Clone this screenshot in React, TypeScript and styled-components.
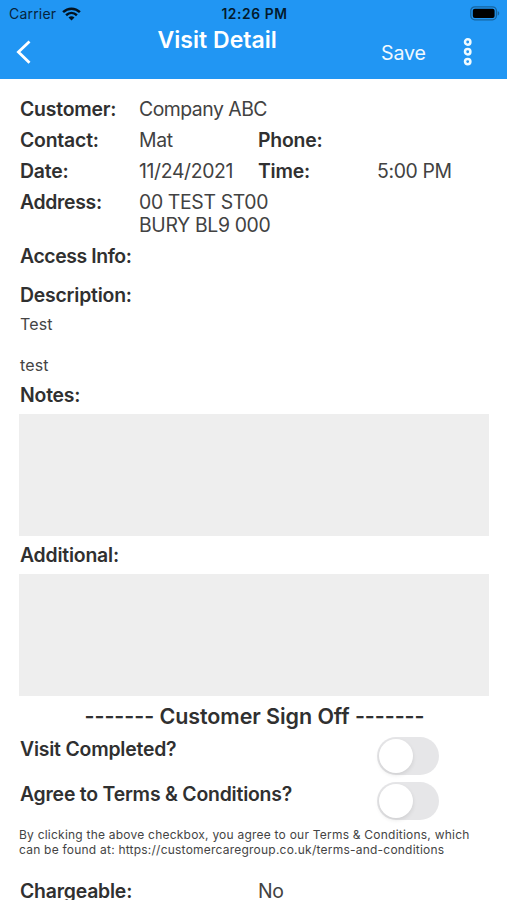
import React from "react";
import styled, { createGlobalStyle } from "styled-components";

const Global = createGlobalStyle`
  * { box-sizing: border-box; }
  html, body { margin: 0; background: #fff; }
  body { height: 900px; overflow: hidden; font-family: Inter, "Liberation Sans", sans-serif; color: #303030; }
`;

const Screen = styled.main`
  width: 507px;
  height: 900px;
  overflow: hidden;
  background: #fff;
`;

const Header = styled.header`
  height: 79px;
  background: #2196f3;
  display: flex;
  flex-direction: column;
`;

const StatusBar = styled.div`
  height: 27px;
  flex: none;
  padding: 0 7px 0 9px;
  display: grid;
  grid-template-columns: 1fr auto 1fr;
  align-items: center;
  line-height: 26px;
  color: #06243d;
`;

const Carrier = styled.div`
  display: flex;
  align-items: center;
  gap: 6px;
  font-size: 14px;
  letter-spacing: 0.2px;
`;

const Clock = styled.div`
  color: #031a2c;
  font-size: 13.8px;
  font-weight: 600;
  letter-spacing: 0.6px;
  white-space: nowrap;
`;

const Battery = styled.svg`
  justify-self: end;
`;

const NavBar = styled.div`
  height: 52px;
  display: grid;
  grid-template-columns: 157.5px 1fr 52px 74px;
  color: #fff;
`;

const BackButton = styled.button`
  border: 0;
  padding: 12px 0 0 15px;
  background: none;
  display: flex;
  align-items: flex-start;
`;

const Title = styled.h1`
  margin: 0;
  font-size: 23px;
  line-height: 27px;
  font-weight: 600;
  letter-spacing: 0.03px;
  white-space: nowrap;
`;

const SaveButton = styled.button`
  border: 0;
  padding: 0;
  background: none;
  color: #f0f9ff;
  font: 400 19.6px/52px Inter, sans-serif;
  letter-spacing: -0.1px;
  text-align: left;
`;

const MenuButton = styled.button`
  border: 0;
  padding: 10px 0 0 29px;
  background: none;
  display: flex;
  align-items: flex-start;
`;

const Content = styled.div`
  padding: 19px 18px 0 20px;
`;

const Details = styled.div`
  display: grid;
  grid-template-columns: 119px 119px 119px 1fr;
  row-gap: 8px;
`;

const Label = styled.div<{ $top?: number; $spacing?: number }>`
  margin-top: ${(p) => p.$top ?? 0}px;
  font-size: 19.4px;
  line-height: 23px;
  font-weight: 600;
  letter-spacing: ${(p) => p.$spacing ?? -0.2}px;
  white-space: nowrap;
`;

const Value = styled.div<{ $span?: number; $spacing?: number }>`
  grid-column: span ${(p) => p.$span ?? 1};
  font-size: 19.4px;
  line-height: 23px;
  letter-spacing: ${(p) => p.$spacing ?? -0.35}px;
  color: #424242;
  white-space: pre;
`;

const Description = styled.p`
  margin: 7px 0 0;
  font-size: 16px;
  line-height: 20.4px;
  letter-spacing: 0.15px;
  white-space: pre-line;
  color: #444;
`;

const NoteArea = styled.div`
  height: 122px;
  margin: 7px 0 0 -1px;
  background: #eee;
`;

const SectionTitle = styled.h2`
  margin: 7px 0 7px;
  text-align: center;
  font-size: 21.5px;
  line-height: 27px;
  font-weight: 600;
  letter-spacing: -0.07px;
  white-space: nowrap;
`;

const ToggleRow = styled.div`
  height: 45px;
  display: grid;
  grid-template-columns: 357px 1fr;
`;

const Switch = styled.button`
  width: 62px;
  height: 38px;
  padding: 2px;
  border: 0;
  border-radius: 19px;
  background: #e6e6e8;
`;

const Knob = styled.span`
  display: block;
  width: 34px;
  height: 34px;
  border-radius: 50%;
  background: #fff;
  box-shadow: 0 2px 4px rgba(0, 0, 0, 0.1);
`;

const Terms = styled.p`
  margin: 1px 0 0 -1px;
  font-size: 12px;
  line-height: 14.3px;
  letter-spacing: 0.225px;
  color: #444;
  white-space: nowrap;
`;

const ChargeRow = styled.div`
  margin-top: 23px;
  display: grid;
  grid-template-columns: 238px 1fr;
`;

function Toggle({ label, top = 0 }: { label: string; top?: number }) {
  return (
    <ToggleRow>
      <Label $top={top}>{label}</Label>
      <Switch role="switch" aria-checked={false} aria-label={label}>
        <Knob />
      </Switch>
    </ToggleRow>
  );
}

export default function App() {
  return (
    <Screen>
      <Global />
      <Header>
        <StatusBar>
          <Carrier>
            Carrier
            <svg width="19" height="14" viewBox="0 0 19 14" fill="none" stroke="#031320" strokeWidth="2.5">
              <path d="M1.1 5.1C5.9.5 13.1.5 17.9 5.1" />
              <path d="M4.1 8.2c3.2-2.9 7.6-2.9 10.8 0" />
              <path d="M6.5 10.5c1.8-1.6 4.2-1.6 6 0l-3 3z" fill="#031320" stroke="none" />
            </svg>
          </Carrier>
          <Clock>12:26 PM</Clock>
          <Battery width="30" height="15" viewBox="0 0 30 15">
            <rect x=".8" y=".8" width="25.6" height="13" rx="4" fill="none" stroke="#16649f" strokeWidth="1.3" />
            <rect x="2.8" y="2.7" width="21.8" height="9.2" rx="2" fill="#000" />
            <path d="M27.7 5c2 .8 2 3.8 0 4.6z" fill="#16649f" />
          </Battery>
        </StatusBar>
        <NavBar>
          <BackButton aria-label="Back">
            <svg width="16" height="26" viewBox="0 0 16 26" fill="none" stroke="#fff" strokeWidth="2.8">
              <path d="M14.5 2.4 3.4 13l11.1 10.8" />
            </svg>
          </BackButton>
          <Title>Visit Detail</Title>
          <SaveButton>Save</SaveButton>
          <MenuButton aria-label="More options">
            <svg width="12" height="30" viewBox="0 0 12 30" fill="none" stroke="#f0fbff" strokeWidth="2.5">
              <circle cx="5.7" cy="5" r="2.7" />
              <circle cx="5.7" cy="14.8" r="2.7" />
              <circle cx="5.7" cy="24.6" r="2.7" />
            </svg>
          </MenuButton>
        </NavBar>
      </Header>
      <Content>
        <Details>
          <Label>Customer:</Label>
          <Value $span={3} $spacing={-0.5}>Company ABC</Value>
          <Label>Contact:</Label>
          <Value>Mat</Value>
          <Label>Phone:</Label>
          <Value />
          <Label>Date:</Label>
          <Value>11/24/2021</Value>
          <Label>Time:</Label>
          <Value>5:00 PM</Value>
          <Label $spacing={-0.3}>Address:</Label>
          <Value $span={3}>{"00 TEST ST00\nBURY BL9 000"}</Value>
          <Label $spacing={-0.4}>Access Info:</Label>
        </Details>
        <Label $top={16}>Description:</Label>
        <Description>{"Test\n\ntest"}</Description>
        <Label $top={9}>Notes:</Label>
        <NoteArea />
        <Label $top={8}>Additional:</Label>
        <NoteArea />
        <SectionTitle>------- Customer Sign Off -------</SectionTitle>
        <Toggle label="Visit Completed?" top={1} />
        <Toggle label="Agree to Terms & Conditions?" top={1} />
        <Terms>
          By clicking the above checkbox, you agree to our Terms &amp; Conditions, which
          <br />
          can be found at: https://customercaregroup.co.uk/terms-and-conditions
        </Terms>
        <ChargeRow>
          <Label>Chargeable:</Label>
          <Value>No</Value>
        </ChargeRow>
      </Content>
    </Screen>
  );
}
